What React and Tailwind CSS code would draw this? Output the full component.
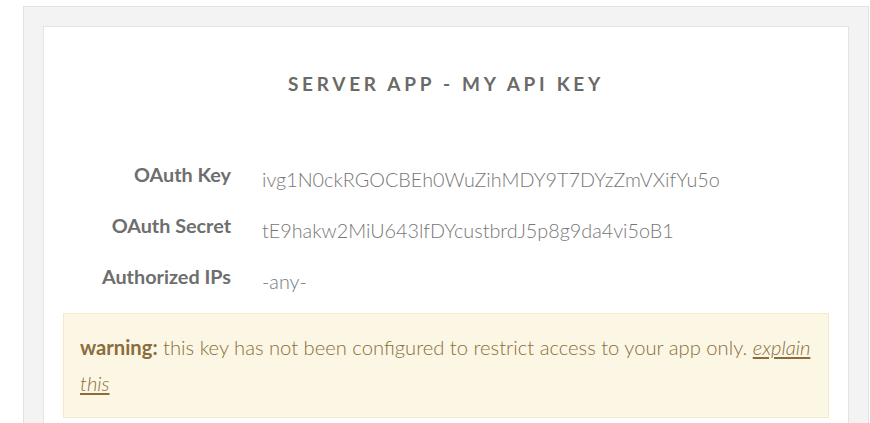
import React from 'react'

const rows = [
  { label: 'OAuth Key', value: 'ivg1N0ckRGOCBEh0WuZihMDY9T7DYzZmVXifYu5o' },
  { label: 'OAuth Secret', value: 'tE9hakw2MiU643lfDYcustbrdJ5p8g9da4vi5oB1' },
  { label: 'Authorized IPs', value: '-any-' },
]

export default function App() {
  return (
    <div className="h-[423px] overflow-hidden bg-white pt-[6px] pl-[23px] pr-px font-['Lato',sans-serif]">
      <div className="h-[500px] border border-[#e2e2e2] bg-[#f3f3f3] px-[19px] pt-[19px]">
        <div className="h-full border border-[#e3e3e3] bg-white px-[19px]">
          <h1 className="pt-[45px] text-center text-[19px] font-bold uppercase leading-[24px] tracking-[3.7px] text-[#6b6a66]">
            Server App - My API Key
          </h1>

          <div className="mt-[64px] flex flex-col gap-[18px]">
            {rows.map(r => (
              <div key={r.label} className="flex items-start">
                <div className="w-[168px] shrink-0 text-right text-[19.8px] font-bold leading-[28px] text-[#6e6e6e]">{r.label}</div>
                <div className="ml-[31px] pt-[5px] text-[19.8px] font-light leading-[28px] text-[#777]">{r.value}</div>
              </div>
            ))}
          </div>

          <div className="mt-[18px] border border-[#f7e8c6] bg-[#fcf7e4] px-[16px] pt-[15px] pb-[16px] text-[20.2px] font-light leading-[36px] text-[#8a6d3b]">
            <p>
              <b className="font-bold">warning:</b> this key has not been configured to restrict access to your app only.{' '}
              <a href="#" className="italic underline">explain this</a>
            </p>
          </div>
        </div>
      </div>
    </div>
  )
}
